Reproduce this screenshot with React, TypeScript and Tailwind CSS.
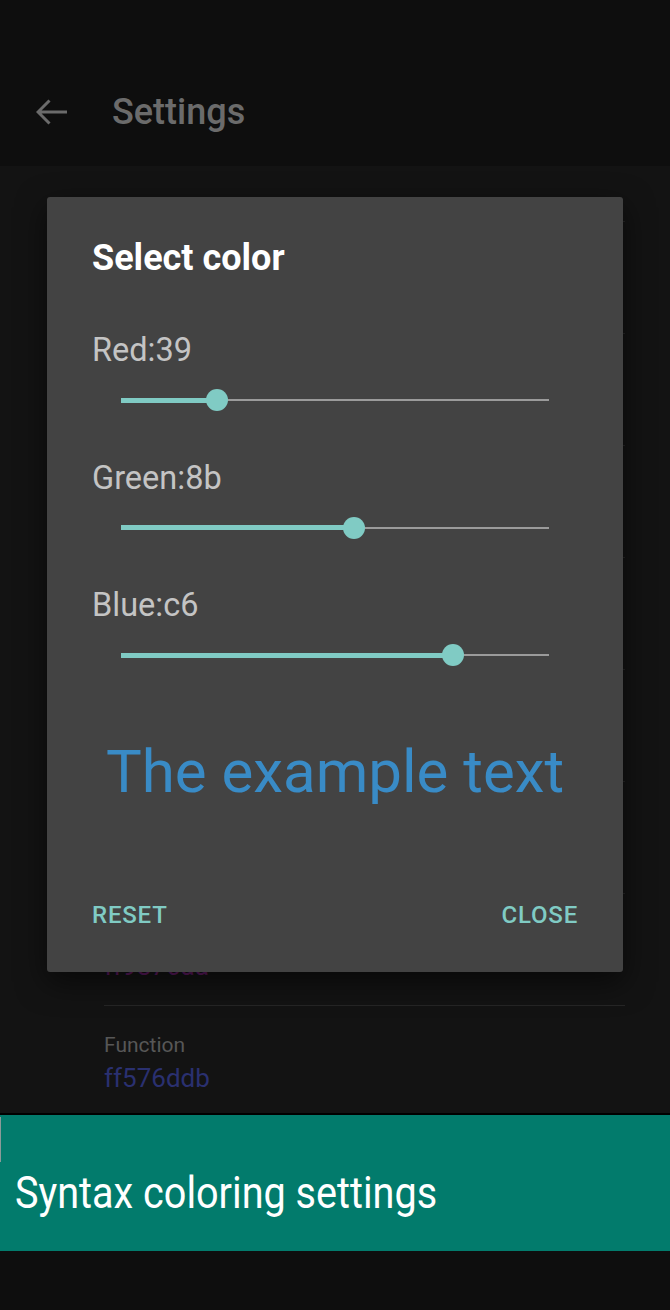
import React from 'react'

const channels = [
  { label: 'Red', hex: '39', value: 0x39 },
  { label: 'Green', hex: '8b', value: 0x8b },
  { label: 'Blue', hex: 'c6', value: 0xc6 },
]

// rows under the dialog; only the last two show any text past its edge
const items = [
  { name: '', value: '', color: '' },
  { name: '', value: '', color: '' },
  { name: '', value: '', color: '' },
  { name: '', value: '', color: '' },
  { name: '', value: '', color: '' },
  { name: '', value: '', color: '' },
  { name: '', value: 'ff9876aa', color: 'text-[#5e1a62]' },
  { name: 'Function', value: 'ff576ddb', color: 'text-[#2a3070]' },
]

function Slider({ value }: { value: number }) {
  const pct = (value / 255) * 100
  return (
    <div className="relative ml-[29px] h-[22px] w-[428px]">
      <div className="absolute left-0 right-0 top-[10px] h-[2px] bg-[#9b9b9b]" />
      <div className="absolute left-0 top-[8.5px] h-[5px] bg-[#80cbc4]" style={{ width: `${pct}%` }} />
      <div
        className="absolute top-0 h-[22px] w-[22px] -translate-x-1/2 rounded-full bg-[#80cbc4]"
        style={{ left: `${pct}%` }}
      />
    </div>
  )
}

export default function App() {
  return (
    <div className="relative flex h-[1310px] w-[670px] flex-col overflow-hidden bg-[#131313] font-['Roboto',sans-serif]">
      {/* toolbar */}
      <div className="h-[166px] shrink-0 bg-[#0e0e0e] pt-[56px]">
        <div className="flex h-[112px] items-center">
          <svg className="ml-[36px]" width="32" height="28" viewBox="0 0 32 28" fill="none">
            <path d="M31 14H2M13.5 2.5L2 14l11.5 11.5" stroke="#6b6b6b" strokeWidth="3" />
          </svg>
          <span className="ml-[44px] text-[36px] font-medium leading-[40px] text-[#6b6b6b]">Settings</span>
        </div>
      </div>

      {/* list behind the dialog */}
      <div className="h-[947px] shrink-0 overflow-hidden">
        <div className="h-[55px]" />
        {items.map((it, i) => (
          <div key={i} className="ml-[104px] mr-[45px] h-[112px] border-t border-[#262626] pt-[27px]">
            <div className="h-[24px] text-[21px] leading-[24px] text-[#575757]">{it.name}</div>
            <div className={`mt-[6px] h-[30px] text-[26px] leading-[30px] ${it.color}`}>{it.value}</div>
          </div>
        ))}
      </div>

      <div className="h-[2px] shrink-0 bg-black" />

      {/* bottom label */}
      <div className="relative h-[136px] shrink-0 bg-[#027b6c] pl-[15px] pt-[52px]">
        <div className="absolute left-0 top-[2px] h-[45px] w-px bg-[#8a9a98]" />
        <div className="origin-left scale-x-[0.9] whitespace-nowrap text-[44px] leading-[52px] text-white">
          Syntax coloring settings
        </div>
      </div>

      <div className="h-[59px] shrink-0 bg-[#0e0e0e]" />

      {/* dialog */}
      <div className="absolute left-[47px] top-[197px] flex h-[775px] w-[576px] flex-col rounded-[3px] bg-[#434343] px-[45px] pt-[41px] shadow-[0_10px_30px_rgba(0,0,0,0.55)]">
        <div className="text-[36px] font-bold leading-[40px] text-white">Select color</div>

        <div className="mt-[52px] flex flex-col gap-[27.5px]">
          {channels.map((c) => (
            <div key={c.label}>
              <div className="text-[32.5px] leading-[40px] text-[#c4c4c4]">
                {c.label}:{c.hex}
              </div>
              <div className="flex h-[60px] items-center">
                <Slider value={c.value} />
              </div>
            </div>
          ))}
        </div>

        <div className="mt-[51px] text-center text-[60px] leading-[72px] text-[#398bc6]">The example text</div>

        <div className="mt-[91px] flex justify-between text-[24px] font-medium leading-[32px] tracking-[0.8px] text-[#80cbc4]">
          <span>RESET</span>
          <span>CLOSE</span>
        </div>
      </div>
    </div>
  )
}
